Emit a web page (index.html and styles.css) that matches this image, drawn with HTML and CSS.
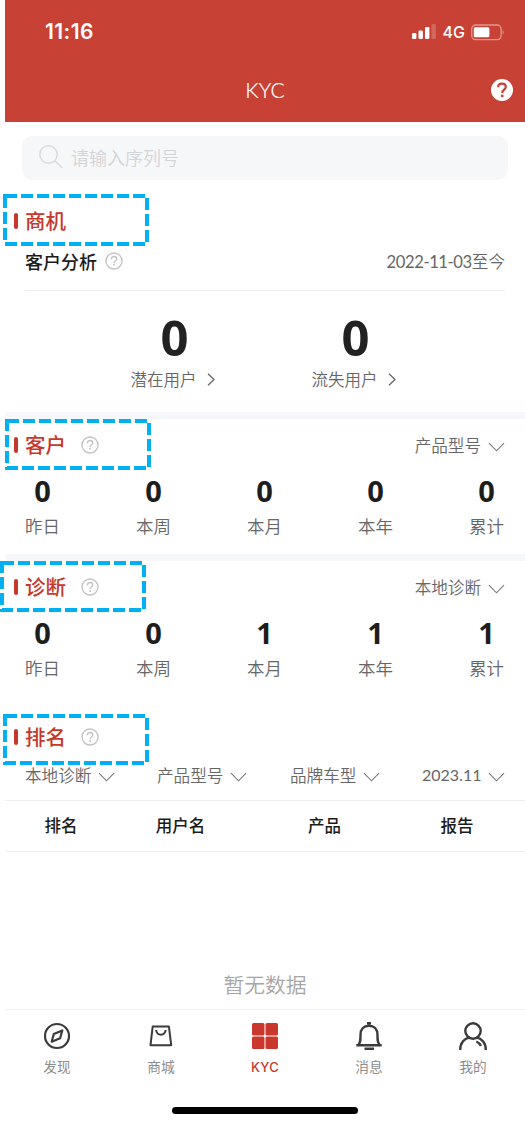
FILE: index.html
```html
<!DOCTYPE html>
<html lang="zh-CN">
<head>
<meta charset="utf-8">
<title>KYC</title>
<link rel="stylesheet" href="styles.css">
</head>
<body>
<svg class="defs" width="0" height="0">
  <symbol id="help" viewBox="0 0 18 18"><circle cx="9" cy="9" r="8" fill="none" stroke="currentColor" stroke-width="1.4"/><path d="M6.300 7.200c0-1.600 1.100-2.700 2.700-2.700s2.700 1 2.700 2.500c0 2-2.600 2-2.600 4" fill="none" stroke="currentColor" stroke-width="1.400"/><circle cx="9.100" cy="13" r=".9" fill="currentColor"/></symbol>
  <symbol id="down" viewBox="0 0 18 10"><path d="M1 1l8 8 8-8" fill="none" stroke="currentColor" stroke-width="1.200"/></symbol>
  <symbol id="next" viewBox="0 0 8 13"><path d="M1 .7l6 5.800-6 5.800" fill="none" stroke="currentColor" stroke-width="1.300"/></symbol>
</svg>
<div class="app">
  <header class="header">
    <div class="status">
      <span class="time">11:16</span>
      <span class="signals">
        <svg width="24" height="16" viewBox="0 0 24 16" fill="#fff"><rect x="0" y="9" width="4.400" height="6" rx="1.300"/><rect x="6.500" y="6.500" width="4.400" height="8.500" rx="1.300"/><rect x="13" y="3" width="4.400" height="12" rx="1.300"/><rect x="19.500" y="0" width="4.400" height="15" rx="1.300" opacity=".2"/></svg>
        <span class="net">4G</span>
        <svg width="34" height="17" viewBox="0 0 34 17"><rect x=".7" y="1" width="29.400" height="14.600" rx="4" fill="none" stroke="#fff" stroke-opacity=".45" stroke-width="1.300"/><rect x="2.800" y="3.300" width="15.600" height="10" rx="1.500" fill="#fff"/><path d="M31.700 5.800q2 2.500 0 5z" fill="#fff" opacity=".45"/></svg>
      </span>
    </div>
    <div class="nav">
      <h1 class="title">KYC</h1>
      <svg class="nav-help" width="22" height="22" viewBox="0 0 22 22"><circle cx="11" cy="11" r="11" fill="#fff"/><path d="M7.200 8.200c0-2.100 1.500-3.500 3.800-3.500s3.800 1.400 3.800 3.300c0 2.500-3.600 2.900-3.600 5.900" fill="none" stroke="#c84135" stroke-width="2.200"/><circle cx="11.200" cy="16.900" r="1.400" fill="#c84135"/></svg>
    </div>
  </header>
  <div class="search">
    <svg width="24" height="24" viewBox="0 0 24 24" fill="none" stroke="#d8dadd" stroke-width="1.400"><circle cx="9.500" cy="9.500" r="8.700"/><path d="M16 16l7.300 7"/></svg>
    <span>请输入序列号</span>
  </div>

  <section class="business">
    <div class="heading"><h2>商机</h2></div>
    <div class="analysis">
      <span class="analysis-name">客户分析</span><svg class="help"><use href="#help"/></svg>
      <span class="date"><span class="num">2022-11-03</span>至今</span>
    </div>
    <div class="totals">
      <div class="total"><b>0</b><span>潜在用户<svg class="next"><use href="#next"/></svg></span></div>
      <div class="total"><b>0</b><span>流失用户<svg class="next"><use href="#next"/></svg></span></div>
    </div>
  </section>

  <section class="metrics customers">
    <div class="heading"><h2>客户</h2><svg class="help"><use href="#help"/></svg><span class="select">产品型号<svg class="down"><use href="#down"/></svg></span></div>
    <div class="stats">
      <div class="stat"><b>0</b><span>昨日</span></div><div class="stat"><b>0</b><span>本周</span></div><div class="stat"><b>0</b><span>本月</span></div><div class="stat"><b>0</b><span>本年</span></div><div class="stat"><b>0</b><span>累计</span></div>
    </div>
  </section>

  <section class="metrics diagnosis">
    <div class="heading"><h2>诊断</h2><svg class="help"><use href="#help"/></svg><span class="select">本地诊断<svg class="down"><use href="#down"/></svg></span></div>
    <div class="stats">
      <div class="stat"><b>0</b><span>昨日</span></div><div class="stat"><b>0</b><span>本周</span></div><div class="stat"><b>1</b><span>本月</span></div><div class="stat"><b>1</b><span>本年</span></div><div class="stat"><b>1</b><span>累计</span></div>
    </div>
  </section>

  <section class="ranking">
    <div class="heading"><h2>排名</h2><svg class="help"><use href="#help"/></svg></div>
    <div class="filters">
      <span class="select">本地诊断<svg class="down"><use href="#down"/></svg></span>
      <span class="select">产品型号<svg class="down"><use href="#down"/></svg></span>
      <span class="select">品牌车型<svg class="down"><use href="#down"/></svg></span>
      <span class="select"><span class="month">2023.11</span><svg class="down"><use href="#down"/></svg></span>
    </div>
    <div class="thead"><span>排名</span><span>用户名</span><span>产品</span><span>报告</span></div>
    <div class="empty">暂无数据</div>
  </section>

  <nav class="tabs">
    <a class="tab"><svg width="28" height="28" viewBox="0 0 28 28" fill="none" stroke="#3b3b3b" stroke-width="2.200"><circle cx="14" cy="14" r="12"/><path d="M19.300 8.500l-2.200 7.700-8.400 3.500 2.100-7.700z" stroke-linejoin="round"/></svg><span>发现</span></a>
    <a class="tab"><svg width="28" height="28" viewBox="0 0 28 28" fill="none" stroke="#3b3b3b" stroke-width="2" stroke-linejoin="round"><path d="M5.700 4.500h16.200l2.300 18.700H3.500z"/><path d="M9.200 8c0 6.200 9.400 6.200 9.400 0"/></svg><span>商城</span></a>
    <a class="tab active"><svg width="28" height="28" viewBox="0 0 28 28" fill="#ca372d"><rect x="1" y="1" width="12.500" height="12.500" rx="1.500"/><rect x="14.500" y="1" width="12.500" height="12.500" rx="1.500"/><rect x="1" y="14.500" width="12.500" height="12.500" rx="1.500"/><rect x="14.500" y="14.500" width="12.500" height="12.500" rx="1.500"/></svg><span>KYC</span></a>
    <a class="tab"><svg width="28" height="28" viewBox="0 0 28 28" fill="none" stroke="#3b3b3b" stroke-width="2.400"><path d="M12 1.300h4M1.300 23.200h25.400M9.500 26.800h9.500M3.500 22.500c2-2 2-4 2-9.500 0-6 3.400-9.200 8.500-9.200s8.500 3.200 8.500 9.200c0 5.500 0 7.500 2 9.500"/></svg><span>消息</span></a>
    <a class="tab"><svg width="28" height="28" viewBox="0 0 28 28" fill="none" stroke="#3b3b3b" stroke-width="2.400"><circle cx="14" cy="9" r="7.700"/><path d="M1.200 28c0-7.300 4.400-11.700 9.300-12.400M17.500 15.600c4.900.7 9.300 5.100 9.300 12.400M17.300 19.500c2 .8 3.600 2.300 4.600 4.600"/></svg><span>我的</span></a>
  </nav>
  <div class="home"></div>
</div>
<svg class="marks" width="525" height="1125" fill="none" stroke="#00b0f0" stroke-width="4" stroke-dasharray="12 4">
  <rect x="5" y="196" width="142" height="48"/>
  <rect x="7" y="421" width="142" height="47"/>
  <rect x="2" y="563" width="142" height="47"/>
  <rect x="5" y="716" width="142" height="47"/>
</svg>
</body>
</html>
```
FILE: styles.css
```css
* { box-sizing: border-box; }
body { margin: 0; position: relative; width: 525px; height: 1125px; overflow: hidden; background: #fff; font-family: "Noto Sans CJK SC", sans-serif; color: #666; font-weight: 350; }
svg { display: block; flex: none; }
.defs { position: absolute; }
h1, h2 { margin: 0; }
.app { margin-left: 5px; display: flex; flex-direction: column; height: 1125px; }

.header { height: 122px; flex: none; background: #c84135; color: #fff; }
.status { height: 64px; padding: 0 20px 0 40px; display: flex; align-items: center; justify-content: space-between; }
.time { font: 600 21px/24px Inter, sans-serif; letter-spacing: .4px; }
.signals { display: flex; align-items: center; }
.net { font: 500 16px/20px Inter, sans-serif; margin: 0 6px 0 7px; }
.nav { height: 52px; display: grid; grid-template-columns: 34px 1fr 34px; align-items: center; }
.title { grid-column: 2; text-align: center; font: 300 21px/26px Lato, sans-serif; -webkit-text-stroke: .2px #fff; }

.search { flex: none; margin: 14px 17px 0; height: 44px; border-radius: 10px; background: #f6f7f9; display: flex; align-items: center; gap: 8px; padding: 0 0 2px 17px; font-size: 18px; color: #d2d4d7; }

.heading { height: 42px; display: flex; align-items: center; padding: 0 20px 0 9px; }
.heading::before { content: ""; width: 4px; height: 16px; border-radius: 2px; background: #c5382c; margin-right: 7px; }
.heading h2 { font-size: 20.5px; line-height: 30px; padding-bottom: 2px; font-weight: 500; color: #c5382c; }
.help { width: 18px; height: 18px; color: #c4c4c4; }
.heading .help { margin-left: 15px; }
.down { width: 17px; height: 10px; margin-left: 7px; margin-top: 5px; color: #777; }
.next { width: 8px; height: 13px; margin-left: 10px; color: #666; }
.select { display: flex; align-items: center; font-size: 16.6px; line-height: 24px; }
.heading .select { margin-left: auto; }
.heading .down { margin-top: 4px; }

.business { height: 232px; padding-top: 20px; }
.analysis { height: 49px; margin: 0 20px; padding-bottom: 10px; display: flex; align-items: center; border-bottom: 1px solid #eeeeef; }
.analysis-name { font-size: 18px; font-weight: 500; color: #1b1b1b; margin-right: 8px; }
.date { margin-left: auto; font-size: 16.6px; }
.num { font-family: Lato, sans-serif; font-weight: 400; letter-spacing: -.4px; }
.totals { display: flex; justify-content: center; padding-top: 18px; }
.total { width: 181px; display: flex; flex-direction: column; align-items: center; }
.total b { font: 700 49px/56px "Open Sans", sans-serif; color: #222; }
.total > span { display: flex; align-items: center; font-size: 16.5px; line-height: 28px; padding-right: 4px; }

.metrics { border-top: 7px solid #f6f7fb; height: 142px; padding-top: 5px; }
.stats { display: flex; justify-content: space-between; padding: 0 21px 0 20px; }
.stat { width: 35px; display: flex; flex-direction: column; align-items: center; }
.stat b { font: 700 29px/49px "Open Sans", sans-serif; color: #1d1d1d; }
.stat span { font-size: 17.5px; line-height: 22px; white-space: nowrap; }

.ranking { height: 313px; padding-top: 20px; }
.ranking .heading { padding-bottom: 1px; }
.filters { height: 43px; display: grid; grid-template-columns: 132px 133px 132px 1fr; align-items: center; padding: 0 20px 9px; border-bottom: 1px solid #eee; }
.month { font-family: Lato, sans-serif; font-size: 16px; font-weight: 400; }
.filters .select:last-child { justify-content: flex-end; }
.thead { display: grid; grid-template-columns: 112px 127px 161px 104px; height: 51px; padding-bottom: 2px; align-items: center; text-align: center; border-bottom: 1px solid #eee; color: #1b1b1b; font-size: 16.5px; font-weight: 500; }
.empty { padding-top: 116px; text-align: center; font-size: 20.8px; line-height: 32px; color: #a6a6a6; }

.tabs { height: 79px; border-top: 1px solid #f2f2f2; display: grid; grid-template-columns: repeat(5, 104px); padding-top: 12px; }
.tab { display: flex; flex-direction: column; align-items: center; font-size: 13.7px; line-height: 20px; color: #8d8d8d; gap: 6px; font-weight: 400; }
.active { color: #ca372d; }
.active span { font-family: Inter, sans-serif; font-size: 13px; line-height: 22px; letter-spacing: .3px; font-weight: 500; }
.home { width: 186px; height: 7px; border-radius: 4px; background: #000; margin: 19px 0 0 167px; }
.marks { position: absolute; left: 0; top: 0; }
```
